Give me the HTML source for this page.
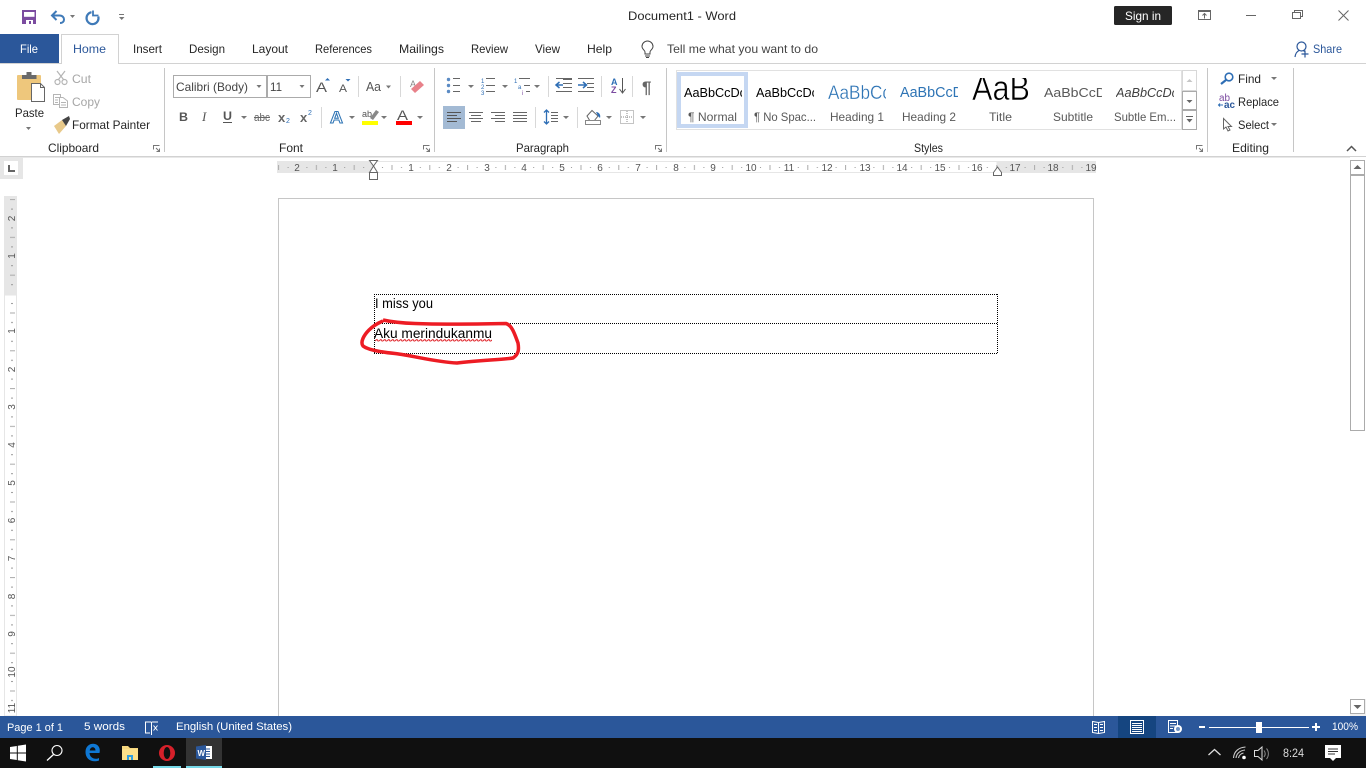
<!DOCTYPE html>
<html><head><meta charset="utf-8"><title>Document1 - Word</title>
<style>
html,body{margin:0;padding:0;width:1366px;height:768px;overflow:hidden;background:#fff}
svg{display:block;font-family:"Liberation Sans",sans-serif;font-size:12px;fill:#444}
.k{fill:#262626}.g{fill:#a6a6a6}.b{fill:#2b579a}.w{fill:#fff}.s{fill:#666}
.n{font-size:10px;fill:#555}
</style></head><body>
<svg xmlns="http://www.w3.org/2000/svg" width="1366" height="768" viewBox="0 0 1366 768">
<defs>
<pattern id="ht" patternUnits="userSpaceOnUse" x="373" y="161" width="37.8" height="13">
<rect x="9" y="6" width="1" height="1" fill="#999"/><rect x="18.5" y="4" width="1" height="5" fill="#aaa"/><rect x="28" y="6" width="1" height="1" fill="#999"/>
</pattern>
<pattern id="vt" patternUnits="userSpaceOnUse" x="4" y="294" width="13" height="37.8">
<rect x="7" y="9" width="2" height="1" fill="#999"/><rect x="6" y="18.5" width="5" height="1" fill="#aaa"/><rect x="7" y="28" width="2" height="1" fill="#999"/>
</pattern>
<pattern id="sq" patternUnits="userSpaceOnUse" x="375" y="339" width="4" height="3">
<path d="M0 2L1 1L2 0.5L3 2L4 2" stroke="#e0262c" stroke-width="1" fill="none"/>
</pattern>
<clipPath id="c1"><rect x="684" y="78" width="58" height="26"/></clipPath>
<clipPath id="c2"><rect x="756" y="78" width="58" height="26"/></clipPath>
<clipPath id="c3"><rect x="828" y="78" width="58" height="28"/></clipPath>
<clipPath id="c4"><rect x="900" y="78" width="58" height="26"/></clipPath>
<clipPath id="c5"><rect x="970" y="78" width="58" height="25"/></clipPath>
<clipPath id="c6"><rect x="1044" y="78" width="58" height="26"/></clipPath>
<clipPath id="c7"><rect x="1116" y="78" width="58" height="26"/></clipPath>
</defs>

<rect width="1366" height="768" fill="#fff"/>

<!-- quick access -->
<path d="M22 10H36V24H22Z" fill="#7b4ba0"/><rect x="24" y="12" width="10.500" height="4.800" fill="#fff"/><rect x="26" y="20" width="7" height="4" fill="#fff"/><rect x="29" y="21" width="2" height="3" fill="#7b4ba0"/>
<path d="M52 15.500H59.500C62.500 15.500 64 17.500 64 19.500C64 21.500 62.500 23 60 23" fill="none" stroke="#3f7ab8" stroke-width="2"/><path d="M56.500 11L52 15.500L56.500 20" fill="none" stroke="#3f7ab8" stroke-width="2"/>
<path d="M70 15H75L72.500 18Z" fill="#777"/>
<path d="M91.500 12.200A6 6 0 1 0 98.300 16.500" fill="none" stroke="#3f7ab8" stroke-width="2.200"/><path d="M93 10.500V15.500H98.500" fill="none" stroke="#3f7ab8" stroke-width="1.800"/>
<rect x="119" y="14" width="5" height="1" fill="#777"/><path d="M119 17H124.500L121.700 20Z" fill="#777"/>

<text x="628" y="20" class="k" textLength="108" lengthAdjust="spacingAndGlyphs">Document1  -  Word</text>

<rect x="1114" y="6" width="58" height="19" rx="1.500" fill="#262626"/>
<text x="1125" y="20" class="w" textLength="36" lengthAdjust="spacingAndGlyphs">Sign in</text>
<rect x="1198.500" y="10.500" width="12" height="9" fill="none" stroke="#666"/><rect x="1198" y="10" width="13" height="2" fill="#666"/><path d="M1204.500 18.500V13.500M1202.500 15.500L1204.500 13.500L1206.500 15.500" stroke="#666" fill="none"/>
<rect x="1246" y="15" width="10" height="1" fill="#666"/>
<path d="M1292.500 12.500H1300.500V18.500H1292.500ZM1294.500 12.500V10.500H1302.500V16.500H1300.500" fill="none" stroke="#666"/>
<path d="M1338.500 10.500L1348.500 20.500M1348.500 10.500L1338.500 20.500" stroke="#666" fill="none"/>

<!-- tabs -->
<rect x="0" y="34" width="59" height="29" fill="#2b579a"/>
<rect x="0" y="63" width="1366" height="1" fill="#d2d2d2"/>
<path d="M61.500 64V34.500H118.500V64" fill="#fff" stroke="#d2d2d2"/><rect x="62" y="62" width="56" height="3" fill="#fff"/>
<text x="20" y="53" class="w" textLength="18" lengthAdjust="spacingAndGlyphs">File</text>
<text x="73" y="53" class="b" textLength="33" lengthAdjust="spacingAndGlyphs">Home</text>
<text x="133" y="53" class="k" textLength="29" lengthAdjust="spacingAndGlyphs">Insert</text>
<text x="189" y="53" class="k" textLength="36" lengthAdjust="spacingAndGlyphs">Design</text>
<text x="252" y="53" class="k" textLength="36" lengthAdjust="spacingAndGlyphs">Layout</text>
<text x="315" y="53" class="k" textLength="57" lengthAdjust="spacingAndGlyphs">References</text>
<text x="399" y="53" class="k" textLength="45" lengthAdjust="spacingAndGlyphs">Mailings</text>
<text x="471" y="53" class="k" textLength="37" lengthAdjust="spacingAndGlyphs">Review</text>
<text x="535" y="53" class="k" textLength="25" lengthAdjust="spacingAndGlyphs">View</text>
<text x="587" y="53" class="k" textLength="25" lengthAdjust="spacingAndGlyphs">Help</text>
<path d="M651 53.500V51.500C651 50 648 48.500 648 46A5.500 5.500 0 1 1 659 46C659 48.500 656 50 656 51.500V53.500ZM651 55.500H656M652 57H655" transform="translate(-6,0.500)" fill="none" stroke="#444"/>
<text x="667" y="53" fill="#444" textLength="151" lengthAdjust="spacingAndGlyphs">Tell me what you want to do</text>
<circle cx="1301.500" cy="46.500" r="4.500" fill="none" stroke="#2b579a" stroke-width="1.200"/><path d="M1295 57C1295.500 53 1297 51.500 1299 50.500M1303 50.500L1305 51.500" fill="none" stroke="#2b579a" stroke-width="1.200"/><path d="M1301.500 54H1308.500M1305 50.500V57.500" stroke="#2b579a" stroke-width="1.200"/>
<text x="1313" y="53" class="b" textLength="29" lengthAdjust="spacingAndGlyphs">Share</text>

<!-- ribbon separators -->
<g fill="#c6c6c6">
<rect x="164" y="68" width="1" height="84"/><rect x="434" y="68" width="1" height="84"/><rect x="666" y="68" width="1" height="84"/><rect x="1207" y="68" width="1" height="84"/><rect x="1293" y="68" width="1" height="84"/>
</g>
<rect x="0" y="156" width="1366" height="1.500" fill="#d2d2d2"/>

<!-- clipboard -->
<rect x="17" y="75" width="24" height="25" rx="1" fill="#eec77c"/>
<rect x="22" y="75" width="14.500" height="4" fill="#6a6a6a"/><rect x="26.500" y="72" width="5" height="3.500" fill="#6a6a6a"/>
<path d="M31.500 83.500H40.500L44.500 87.500V101.500H31.500Z" fill="#fff" stroke="#666"/><path d="M40.500 83.500V87.500H44.500" fill="none" stroke="#666"/>
<text x="15" y="117" class="k" textLength="29" lengthAdjust="spacingAndGlyphs">Paste</text>
<path d="M26 127H31L28.500 130Z" fill="#777"/>
<g fill="none" stroke="#b5b5b5" stroke-width="1.200"><circle cx="57.500" cy="82" r="2.500"/><circle cx="64.500" cy="82" r="2.500"/><path d="M58.500 79.500L65 71M63.500 79.500L57 71"/></g>
<text x="72" y="83" class="g" textLength="19" lengthAdjust="spacingAndGlyphs">Cut</text>
<g fill="#fff" stroke="#b5b5b5"><path d="M53.500 94.500H60.500V104.500H53.500Z"/><path d="M59.500 97.500H63L67.500 101V107.500H59.500Z"/><path d="M55 97.500H59M55 100H58M55 102.500H58M61 102.500H66M61 105H66" fill="none"/></g>
<text x="72" y="106" class="g" textLength="28" lengthAdjust="spacingAndGlyphs">Copy</text>
<path d="M54 126L62 120L66 126L59 134Z" fill="#e8c98a"/><path d="M62 120L69 116L70 119L66 126Z" fill="#444"/>
<text x="72" y="129" class="k" textLength="78" lengthAdjust="spacingAndGlyphs">Format Painter</text>
<text x="48" y="152" class="k" textLength="51" lengthAdjust="spacingAndGlyphs">Clipboard</text>
<g fill="none" stroke="#777"><path d="M153.500 149.500V145.500H159.500"/><path d="M156 148L159.500 151.500M156.500 151.500H159.500V148.500"/></g>

<!-- font -->
<rect x="173.500" y="75.500" width="93" height="22" fill="#fff" stroke="#ababab"/><rect x="267.500" y="75.500" width="43" height="22" fill="#fff" stroke="#ababab"/>
<text x="176" y="91" fill="#444" textLength="72" lengthAdjust="spacingAndGlyphs">Calibri (Body)</text>
<text x="270" y="91" fill="#444" textLength="12" lengthAdjust="spacingAndGlyphs">11</text>
<path d="M256.500 85H261.500L259 88ZM299.500 85H304.500L302 88Z" fill="#777"/>
<text x="316" y="92" fill="#555" font-size="14" textLength="11" lengthAdjust="spacingAndGlyphs">A</text><path d="M325 80.500H330L327.500 78Z" fill="#2e6eb5"/>
<text x="339" y="92" fill="#555" font-size="11" textLength="8" lengthAdjust="spacingAndGlyphs">A</text><path d="M345.500 79H350.500L348 81.500Z" fill="#2e6eb5"/>
<rect x="358" y="76" width="1" height="21" fill="#d8d8d8"/>
<text x="366" y="91" fill="#555" font-size="13" textLength="15" lengthAdjust="spacingAndGlyphs">Aa</text><path d="M386 85.500H391L388.500 88.500Z" fill="#777"/>
<rect x="400" y="76" width="1" height="21" fill="#d8d8d8"/>
<text x="410" y="87" fill="#888" font-size="9">A</text><path d="M411 89L420 81L424 85L415 93Z" fill="#e8818a"/>
<text x="179" y="121" font-weight="bold" fill="#555" textLength="9" lengthAdjust="spacingAndGlyphs">B</text>
<text x="202" y="121" font-style="italic" font-family="Liberation Serif" fill="#555" font-size="13">I</text>
<text x="223" y="120" font-weight="bold" fill="#555" textLength="9" lengthAdjust="spacingAndGlyphs">U</text><rect x="223" y="122" width="9" height="1" fill="#555"/>
<path d="M241 116H247L244 119Z" fill="#777"/>
<text x="254" y="121" fill="#666" font-size="11" textLength="16" lengthAdjust="spacingAndGlyphs">abc</text><rect x="254" y="117" width="16" height="1" fill="#666"/>
<text x="278" y="122" font-weight="bold" fill="#666" font-size="13">x</text><text x="286" y="123" fill="#2e6eb5" font-size="7">2</text>
<text x="300" y="122" font-weight="bold" fill="#666" font-size="13">x</text><text x="308" y="115" fill="#2e6eb5" font-size="7">2</text>
<rect x="321" y="107" width="1" height="21" fill="#d8d8d8"/>
<text x="330" y="123" font-size="17" fill="#fff" stroke="#2e74b5" stroke-width="1" font-weight="bold" textLength="13" lengthAdjust="spacingAndGlyphs">A</text>
<path d="M349 116H355L352 119Z" fill="#777"/>
<text x="362" y="117" fill="#555" font-size="9">ab</text><path d="M370 118L376 110L379 112L373 120Z" fill="#888"/>
<rect x="362" y="121" width="16" height="4" fill="#ffff00"/>
<path d="M381 116H387L384 119Z" fill="#777"/>
<text x="397" y="120" fill="#555" font-size="14" textLength="11" lengthAdjust="spacingAndGlyphs">A</text><rect x="396" y="121" width="16" height="4" fill="#ff0000"/>
<path d="M417 116H423L420 119Z" fill="#777"/>
<text x="279" y="152" class="k" textLength="24" lengthAdjust="spacingAndGlyphs">Font</text>
<g fill="none" stroke="#777"><path d="M423.500 149.500V145.500H429.500"/><path d="M426 148L429.500 151.500M426.500 151.500H429.500V148.500"/></g>

<!-- paragraph -->
<g fill="#5b8bc4"><circle cx="448.500" cy="79.500" r="1.700"/><circle cx="448.500" cy="85.500" r="1.700"/><circle cx="448.500" cy="91.500" r="1.700"/></g>
<path d="M453 78.500H460M453 85.500H460M453 91.500H460" stroke="#666"/><path d="M468 85H474L471 88Z" fill="#777"/>
<text x="481" y="83" fill="#2e6eb5" font-size="6">1</text><text x="481" y="89" fill="#2e6eb5" font-size="6">2</text><text x="481" y="95" fill="#2e6eb5" font-size="6">3</text>
<path d="M486 78.500H495M486 85.500H495M486 91.500H495" stroke="#666"/><path d="M502 85H508L505 88Z" fill="#777"/>
<text x="514" y="83" fill="#2e6eb5" font-size="6">1</text><text x="518" y="89" fill="#2e6eb5" font-size="6">a</text><text x="522" y="95" fill="#7b4ba0" font-size="6">i</text>
<path d="M519 78.500H530M524 85.500H530M526 91.500H530" stroke="#666"/><path d="M534 85H540L537 88Z" fill="#777"/>
<rect x="548" y="76" width="1" height="21" fill="#d8d8d8"/>
<path d="M563 79.500H572M563 83.500H572M563 87.500H572M556 91.500H572M556 78.500H572" stroke="#666"/><path d="M556 85H563M559.500 82L556 85L559.500 88" stroke="#2e6eb5" stroke-width="1.500" fill="none"/>
<path d="M578 78.500H594M587 83.500H594M587 87.500H594M578 91.500H594" stroke="#666"/><path d="M578 85H586M583 82L586.500 85L583 88" stroke="#2e6eb5" stroke-width="1.500" fill="none"/>
<rect x="601" y="76" width="1" height="21" fill="#d8d8d8"/>
<text x="611" y="85" fill="#2e6eb5" font-size="9" font-weight="bold">A</text><text x="611" y="93" fill="#7b4ba0" font-size="9" font-weight="bold">Z</text>
<path d="M622.500 78V92M619.500 89L622.500 93L625.500 89" stroke="#555" fill="none"/>
<rect x="632" y="76" width="1" height="21" fill="#d8d8d8"/>
<text x="642" y="93" fill="#666" font-size="17" font-weight="bold">¶</text>

<rect x="443" y="106" width="22" height="23" fill="#a3bad4"/>
<path d="M447 112.500H461M447 115.500H457M447 118.500H461M447 121.500H457" stroke="#555" fill="none"/>
<path d="M469 112.500H483M471 115.500H481M469 118.500H483M471 121.500H481" stroke="#666" fill="none"/>
<path d="M491 112.500H505M495 115.500H505M491 118.500H505M495 121.500H505" stroke="#666" fill="none"/>
<path d="M513 112.500H527M513 115.500H527M513 118.500H527M513 121.500H527" stroke="#666" fill="none"/>
<rect x="535" y="107" width="1" height="21" fill="#d8d8d8"/>
<path d="M546.500 110V124M544 112.500L546.500 110L549 112.500M544 121.500L546.500 124L549 121.500" stroke="#2e6eb5" fill="none" stroke-width="1.300"/>
<path d="M551 112.500H558M551 115.500H558M551 118.500H558M551 121.500H558" stroke="#666"/><path d="M563 116H569L566 119Z" fill="#777"/>
<rect x="577" y="107" width="1" height="21" fill="#d8d8d8"/>
<path d="M587 116L592 110.500L598 116L594 121H590Z" fill="#fff" stroke="#666"/><path d="M596 112C599 112 601 115 600 118L598 116Z" fill="#2e6eb5"/><rect x="585.500" y="120.500" width="15" height="4" fill="#fff" stroke="#888"/>
<path d="M606 116H612L609 119Z" fill="#777"/>
<rect x="620.500" y="110.500" width="13" height="13" fill="none" stroke="#888" stroke-dasharray="1 1"/><path d="M627 111V123M621 117H633" stroke="#888" stroke-dasharray="1 1"/>
<path d="M640 116H646L643 119Z" fill="#777"/>
<text x="516" y="152" class="k" textLength="53" lengthAdjust="spacingAndGlyphs">Paragraph</text>
<g fill="none" stroke="#777"><path d="M655.500 149.500V145.500H661.500"/><path d="M658 148L661.500 151.500M658.500 151.500H661.500V148.500"/></g>

<!-- styles -->
<rect x="676.500" y="70.500" width="505" height="59" fill="#fff" stroke="#e1e1e1"/>
<rect x="679" y="74" width="67" height="52" fill="#fff" stroke="#c5d7f2" stroke-width="4"/>
<text x="684" y="97" clip-path="url(#c1)" font-size="12.500" fill="#000" textLength="62" lengthAdjust="spacingAndGlyphs">AaBbCcDc</text>
<text x="756" y="97" clip-path="url(#c2)" font-size="12.500" fill="#000" textLength="62" lengthAdjust="spacingAndGlyphs">AaBbCcDc</text>
<text x="828" y="99" clip-path="url(#c3)" font-size="19.500" fill="#2e74b5" stroke="#fff" stroke-width="0.300" textLength="63" lengthAdjust="spacingAndGlyphs">AaBbCc</text>
<text x="900" y="97" clip-path="url(#c4)" font-size="14.500" fill="#2e74b5" textLength="63" lengthAdjust="spacingAndGlyphs">AaBbCcD</text>
<text x="972" y="100" clip-path="url(#c5)" font-size="35" fill="#000" stroke="#fff" stroke-width="0.600" textLength="58" lengthAdjust="spacingAndGlyphs">AaB</text>
<text x="1044" y="97" clip-path="url(#c6)" font-size="12.500" fill="#595959" textLength="62" lengthAdjust="spacingAndGlyphs">AaBbCcD</text>
<text x="1116" y="97" clip-path="url(#c7)" font-size="12.500" font-style="italic" fill="#404040" textLength="62" lengthAdjust="spacingAndGlyphs">AaBbCcDc</text>
<text x="688" y="121" fill="#595959" textLength="49" lengthAdjust="spacingAndGlyphs">¶ Normal</text>
<text x="754" y="121" fill="#595959" textLength="62" lengthAdjust="spacingAndGlyphs">¶ No Spac...</text>
<text x="830" y="121" fill="#595959" textLength="54" lengthAdjust="spacingAndGlyphs">Heading 1</text>
<text x="902" y="121" fill="#595959" textLength="54" lengthAdjust="spacingAndGlyphs">Heading 2</text>
<text x="989" y="121" fill="#595959" textLength="23" lengthAdjust="spacingAndGlyphs">Title</text>
<text x="1053" y="121" fill="#595959" textLength="40" lengthAdjust="spacingAndGlyphs">Subtitle</text>
<text x="1114" y="121" fill="#595959" textLength="62" lengthAdjust="spacingAndGlyphs">Subtle Em...</text>
<g fill="#fff" stroke="#ababab"><rect x="1182.500" y="70.500" width="14" height="20" stroke="#d8d8d8"/><rect x="1182.500" y="91.500" width="14" height="18"/><rect x="1182.500" y="110.500" width="14" height="19"/></g>
<path d="M1186.500 82H1192.500L1189.500 79Z" fill="#c6c6c6"/><path d="M1186.500 100H1192.500L1189.500 103Z" fill="#666"/><rect x="1186" y="116" width="7" height="1" fill="#666"/><path d="M1186.500 119H1192.500L1189.500 122.500Z" fill="#666"/>
<text x="914" y="152" class="k" textLength="29" lengthAdjust="spacingAndGlyphs">Styles</text>
<g fill="none" stroke="#777"><path d="M1196.500 149.500V145.500H1202.500"/><path d="M1199 148L1202.500 151.500M1199.500 151.500H1202.500V148.500"/></g>

<!-- editing -->
<circle cx="1229" cy="77" r="3.800" fill="none" stroke="#2e6eb5" stroke-width="1.600"/><path d="M1226 80L1221 84" stroke="#2e6eb5" stroke-width="2.200"/>
<text x="1238" y="83" class="k" textLength="23" lengthAdjust="spacingAndGlyphs">Find</text><path d="M1271 77H1277L1274 80Z" fill="#777"/>
<text x="1219" y="101" font-size="10" fill="#7b4ba0" textLength="11" lengthAdjust="spacingAndGlyphs">ab</text>
<text x="1224" y="108" font-size="10" fill="#2b579a" font-weight="bold" textLength="11" lengthAdjust="spacingAndGlyphs">ac</text>
<path d="M1219 105H1223M1220 103.500L1218.500 105L1220 106.500" stroke="#2e6eb5" fill="none"/>
<text x="1238" y="106" class="k" textLength="41" lengthAdjust="spacingAndGlyphs">Replace</text>
<path d="M1223.500 118.500V129L1226 127L1228 131L1230 130L1228 126.500H1231.500Z" fill="#fff" stroke="#666"/>
<text x="1238" y="129" class="k" textLength="31" lengthAdjust="spacingAndGlyphs">Select</text><path d="M1271 123H1277L1274 126Z" fill="#777"/>
<text x="1232" y="152" class="k" textLength="37" lengthAdjust="spacingAndGlyphs">Editing</text>
<path d="M1347 151L1351.500 146.500L1356 151" stroke="#555" stroke-width="1.500" fill="none"/>

<!-- rulers -->
<rect x="0" y="157" width="23" height="22" fill="#e6e6e6"/><rect x="4" y="161" width="14" height="14" fill="#fff"/><path d="M9 165V171H15" fill="none" stroke="#666" stroke-width="2"/>
<rect x="277" y="161" width="96" height="12" fill="#e6e6e6"/><rect x="997" y="161" width="99" height="12" fill="#e6e6e6"/>
<rect x="373" y="161.500" width="624" height="11" fill="#fff" stroke="#e6e6e6"/>
<rect x="277" y="161" width="819" height="13" fill="url(#ht)"/>
<g class="n" text-anchor="middle">
<text x="297" y="171">2</text><text x="335" y="171">1</text><text x="411" y="171">1</text><text x="449" y="171">2</text><text x="487" y="171">3</text><text x="524" y="171">4</text><text x="562" y="171">5</text><text x="600" y="171">6</text><text x="638" y="171">7</text><text x="676" y="171">8</text><text x="713" y="171">9</text><text x="751" y="171">10</text><text x="789" y="171">11</text><text x="827" y="171">12</text><text x="865" y="171">13</text><text x="902" y="171">14</text><text x="940" y="171">15</text><text x="977" y="171">16</text><text x="1015" y="171">17</text><text x="1053" y="171">18</text><text x="1091" y="171">19</text>
</g>
<path d="M369.500 160.500H377.500L373.500 166ZM373.500 166L369.500 172.500H377.500ZM369.500 172.500H377.500V179.500H369.500Z" fill="#fff" stroke="#666"/>
<path d="M997.500 167L993.500 172.500V175.500H1001.500V172.500Z" fill="#fff" stroke="#666"/>

<rect x="4" y="196" width="13" height="99" fill="#e6e6e6"/>
<rect x="4.500" y="295" width="12" height="421" fill="#fff" stroke="#e6e6e6"/>
<rect x="4" y="196" width="13" height="520" fill="url(#vt)"/>
<g class="n" text-anchor="middle">
<text transform="translate(15,218.500) rotate(-90)">2</text><text transform="translate(15,256) rotate(-90)">1</text>
<text transform="translate(15,331) rotate(-90)">1</text><text transform="translate(15,369.500) rotate(-90)">2</text><text transform="translate(15,407) rotate(-90)">3</text><text transform="translate(15,445) rotate(-90)">4</text><text transform="translate(15,483) rotate(-90)">5</text><text transform="translate(15,520.500) rotate(-90)">6</text><text transform="translate(15,558.500) rotate(-90)">7</text><text transform="translate(15,596.500) rotate(-90)">8</text><text transform="translate(15,634) rotate(-90)">9</text><text transform="translate(15,672) rotate(-90)">10</text><text transform="translate(15,708) rotate(-90)">11</text>
</g>

<!-- page -->
<path d="M278.500 716V198.500H1093.500V716" fill="#fff" stroke="#c6c6c6"/>
<g fill="none" stroke="#000" stroke-dasharray="1 1">
<path d="M374 294.500H998"/><path d="M374 323.500H998"/><path d="M374 353.500H998"/>
<path d="M374.500 294V354"/><path d="M997.500 294V354"/>
</g>
<text x="375" y="308" font-size="13.500" fill="#000" textLength="58" lengthAdjust="spacingAndGlyphs">I miss you</text>
<text x="374" y="338" font-size="13.500" fill="#000" textLength="118" lengthAdjust="spacingAndGlyphs">Aku merindukanmu</text>
<rect x="375" y="339" width="117" height="3" fill="url(#sq)"/>
<path d="M383 320C392 322 400 323 415 323.500C440 324.500 480 324 506 323.500C512 325 515 335 518 343C519 349 519 354 513 358C500 360 480 360 457 363C435 362 415 356 395 353.500C380 352 368 350 363 346C360 342 364 335 369 330C373 326 378 323 383 321" fill="none" stroke="#ed1c24" stroke-width="3.500" stroke-linejoin="round"/>

<!-- scrollbar -->
<rect x="1350" y="157" width="16" height="559" fill="#fff"/>
<rect x="1350.500" y="160.500" width="14" height="14" fill="#fff" stroke="#ababab"/><path d="M1353.500 169H1361.500L1357.500 165Z" fill="#666"/>
<rect x="1350.500" y="175.500" width="14" height="255" fill="#fff" stroke="#ababab"/>
<rect x="1350" y="699" width="16" height="17" fill="#f0f0f0"/>
<rect x="1350.500" y="699.500" width="14" height="14" fill="#fff" stroke="#ababab"/><path d="M1353.500 705H1361.500L1357.500 709Z" fill="#666"/>

<!-- status bar -->
<rect x="0" y="716" width="1366" height="22" fill="#2b579a"/>
<text x="7" y="731" class="w" font-size="11" textLength="56" lengthAdjust="spacingAndGlyphs">Page 1 of 1</text>
<text x="84" y="730" class="w" font-size="11" textLength="41" lengthAdjust="spacingAndGlyphs">5 words</text>
<path d="M151.500 722H145.500V733H150M151.500 722V735" fill="none" stroke="#fff"/><path d="M152 722H158M153.500 725.500L157.500 730.500M157.500 725.500L153.500 730.500" fill="none" stroke="#fff"/>
<text x="176" y="730" class="w" font-size="11" textLength="116" lengthAdjust="spacingAndGlyphs">English (United States)</text>
<path d="M1098.500 722.500L1092.500 721.500V732.500L1098.500 733.500L1104.500 732.500V721.500ZM1098.500 722.500V733.500" fill="none" stroke="#fff"/><path d="M1094 724.500H1097M1094 727.500H1097M1094 730.500H1097M1100 724.500H1103M1100 727.500H1103M1100 730.500H1103" stroke="#fff" fill="none"/>
<rect x="1118" y="716" width="38" height="22" fill="#154580"/>
<rect x="1130.500" y="720.500" width="13" height="13" fill="none" stroke="#fff"/><path d="M1132 723.500H1142M1132 725.500H1142M1132 727.500H1142M1132 729.500H1142M1132 731.500H1142" stroke="#fff"/>
<rect x="1168.500" y="720.500" width="9" height="12" fill="none" stroke="#fff"/><path d="M1170 723.500H1176M1170 726H1176M1170 728.500H1173" stroke="#fff"/><circle cx="1178" cy="729" r="4" fill="#fff"/><circle cx="1178" cy="729" r="2" fill="#6f92c4"/>
<rect x="1199" y="726" width="6" height="2" fill="#fff"/>
<rect x="1209" y="727" width="100" height="1" fill="#fff"/>
<rect x="1256" y="722" width="6" height="11" fill="#fff"/>
<rect x="1312" y="726" width="8" height="2" fill="#fff"/><rect x="1315" y="723" width="2" height="8" fill="#fff"/>
<text x="1332" y="730" class="w" font-size="11" textLength="26" lengthAdjust="spacingAndGlyphs">100%</text>

<!-- taskbar -->
<rect x="0" y="738" width="1366" height="30" fill="#101010"/>
<path d="M10 747L16.800 746V752.500H10ZM17.800 745.800L26 744.500V752.500H17.800ZM10 753.500H16.800V760L10 759ZM17.800 753.500H26V761.500L17.800 760.200Z" fill="#fff"/>
<circle cx="57" cy="750.500" r="5" fill="none" stroke="#fff" stroke-width="1.100"/><path d="M53.500 754.500L47 760.500" stroke="#fff" stroke-width="1.300"/>
<path d="M99.500 753H89.500C89.800 758 95 760 99 758V760.500C92 763 85.500 759.500 85.500 752C85.500 744.500 92 743 95 744C99 745 100.500 749 99.500 753ZM89.700 750.500H95.500C95.500 746.500 90.500 746 89.700 750.500Z" fill="#0f78d4"/>
<path d="M122 746H128L130 748H138V760H122Z" fill="#f6d77e"/><rect x="122" y="749" width="16" height="11" fill="#fbe08a"/><path d="M127 760V755H133V760H131V757H129V760Z" fill="#2f9fe0"/>
<circle cx="167" cy="753" r="8" fill="#d6202a"/><ellipse cx="167" cy="753" rx="3.300" ry="6" fill="#101010"/>
<rect x="186" y="738" width="36" height="30" fill="#333"/>
<rect x="153" y="766" width="28" height="2" fill="#76d9e8"/><rect x="186" y="766" width="36" height="2" fill="#76d9e8"/>
<rect x="202" y="746" width="10" height="13" fill="#fff"/><path d="M204 749H210M204 751.500H210M204 754H210M204 756.500H210" stroke="#2b579a"/><path d="M196 746.500L206 745V760L196 758.500Z" fill="#2b579a"/>
<text x="197.500" y="756" font-size="8" font-weight="bold" class="w">W</text>
<path d="M1208.500 755L1214.500 749.500L1220.500 755" fill="none" stroke="#ddd" stroke-width="1.300"/>
<g fill="none" stroke="#ccc" stroke-width="1.100"><path d="M1233.500 758C1234 751 1239 747.500 1245.500 747"/><path d="M1236 758C1236.500 753.500 1240 750.500 1245 750"/><path d="M1238.500 758C1239 755.500 1241 753.500 1243.500 753"/></g><circle cx="1244" cy="757.500" r="1.800" fill="#fff"/>
<path d="M1254.500 750.500H1258L1262 747V760L1258 756.500H1254.500Z" fill="none" stroke="#ddd"/>
<path d="M1264 750.500C1265.500 752.500 1265.500 755 1264 757M1266.500 748.500C1269 751.500 1269 756 1266.500 759" fill="none" stroke="#888"/>
<text x="1283" y="757" font-size="11.500" fill="#ddd" textLength="21" lengthAdjust="spacingAndGlyphs">8:24</text>
<path d="M1325 745H1341V758H1336L1333 761L1330 758H1325Z" fill="#fff"/><path d="M1328 749H1338M1328 751.500H1338M1328 754H1335" stroke="#333"/>
</svg>
</body></html>
